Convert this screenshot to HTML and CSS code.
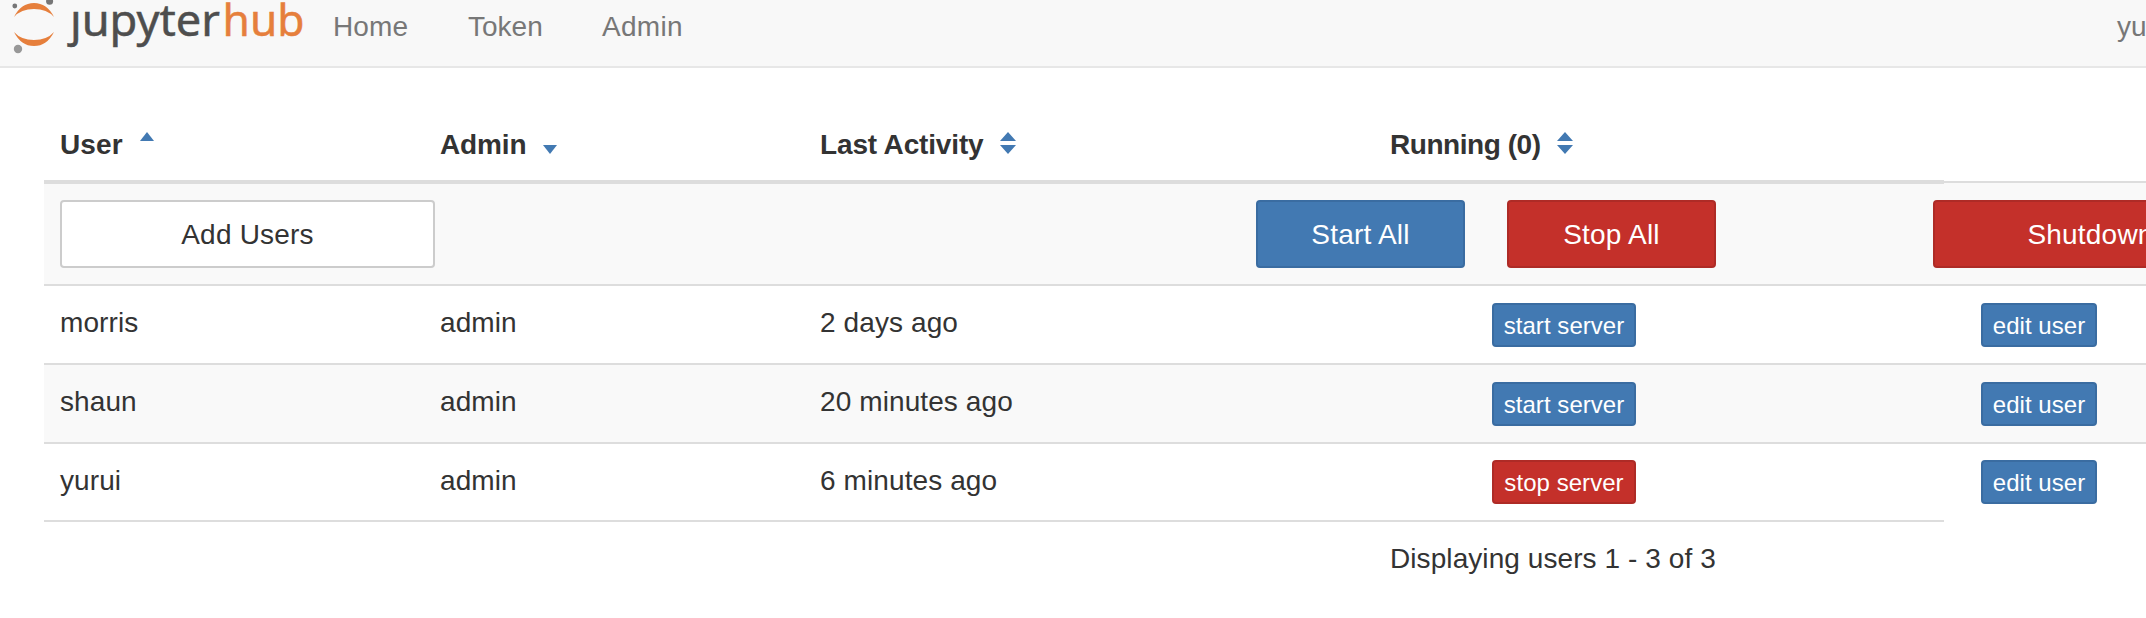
FILE: index.html
```html
<!DOCTYPE html>
<html lang="en">
<head>
<meta charset="utf-8">
<title>JupyterHub</title>
<link rel="stylesheet" href="styles.css">
</head>
<body>
<nav class="navbar">
  <svg class="logo" width="320" height="66" viewBox="0 0 320 66" role="img" aria-label="jupyterhub">
    <path d="M14 17Q21 3 34 3T54 17Q47 9 34 9T14 17Z" fill="#e67f3c"/>
    <path d="M14 32Q21 40 34 40T54 32Q47 46 34 46T14 32Z" fill="#e67f3c"/>
    <circle cx="14.8" cy="6" r="2.4" fill="#767677"/>
    <circle cx="49.6" cy="1.3" r="3.5" fill="#767677"/>
    <circle cx="18" cy="49" r="4.2" fill="#989898"/>
    <text class="logo-text jupyter" x="70" y="36" textLength="150" lengthAdjust="spacingAndGlyphs">ȷupyter</text>
    <text class="logo-text hub" x="222.5" y="36" textLength="82" lengthAdjust="spacingAndGlyphs">hub</text>
  </svg>
  <a class="nav-home">Home</a>
  <a class="nav-token">Token</a>
  <a class="nav-admin">Admin</a>
  <span class="nav-user">yurui</span>
</nav>
<main class="panel">
  <div class="row head">
    <div class="cell">User<svg class="sort" width="18" height="24"><path d="M2 10L9 1L16 10Z"/></svg></div>
    <div class="cell tight">Admin<svg class="sort" width="18" height="24"><path d="M2 14L9 23L16 14Z"/></svg></div>
    <div class="cell tight">Last Activity<svg class="sort" width="18" height="24"><path d="M1 10L9 1L17 10ZM1 14L9 23L17 14Z"/></svg></div>
    <div class="cell tighter">Running (0)<svg class="sort" width="18" height="24"><path d="M1 10L9 1L17 10ZM1 14L9 23L17 14Z"/></svg></div>
  </div>
  <div class="row actions striped">
    <button class="btn add">Add Users</button>
    <button class="btn primary start">Start All</button>
    <button class="btn danger stop">Stop All</button>
    <button class="btn danger shutdown">Shutdown Hub</button>
  </div>
  <div class="row user">
    <div class="cell">morris</div><div class="cell">admin</div><div class="cell">2 days ago</div>
    <div class="server"><button class="btn small primary">start server</button></div>
    <div class="edit"><button class="btn small primary">edit user</button></div>
  </div>
  <div class="row user striped">
    <div class="cell">shaun</div><div class="cell">admin</div><div class="cell">20 minutes ago</div>
    <div class="server"><button class="btn small primary">start server</button></div>
    <div class="edit"><button class="btn small primary">edit user</button></div>
  </div>
  <div class="row user last">
    <div class="cell">yurui</div><div class="cell">admin</div><div class="cell">6 minutes ago</div>
    <div class="server"><button class="btn small danger">stop server</button></div>
    <div class="edit"><button class="btn small primary">edit user</button></div>
  </div>
  <div class="row foot"><div class="summary">Displaying users 1 - 3 of 3</div></div>
</main>
</body>
</html>
```

FILE: styles.css
```css
* { box-sizing: border-box; }
body {
  margin: 0;
  height: 618px;
  overflow: hidden;
  background: #fff;
  color: #333;
  font: 28px/40px "Liberation Sans", Arial, sans-serif;
}
.navbar {
  display: flex;
  height: 68px;
  background: #f8f8f8;
  border-bottom: 2px solid #e7e7e7;
  color: #777;
  white-space: nowrap;
}
.navbar a, .nav-user { padding-top: 7px; }
.logo { flex: none; margin-right: 13px; }
.logo-text { font: 44.5px "Noto Sans", sans-serif; stroke-width: 0.5px; }
.jupyter { fill: #4e4e4e; stroke: #4e4e4e; }
.hub { fill: #e67f3c; stroke: #e67f3c; }
.nav-home { width: 135px; letter-spacing: 0.1px; }
.nav-token { width: 134px; }
.nav-admin { letter-spacing: 0.3px; }
.nav-user { width: 29px; margin-left: auto; }

.panel {
  width: 2102px;
  margin-left: 44px;
}
.row {
  display: grid;
  grid-template-columns: 380px 380px 570px 570px 202px;
}
.cell { padding-left: 16px; white-space: nowrap; letter-spacing: 0.1px; }
.head {
  position: relative;
  z-index: 1;
  width: 1900px;
  height: 116px;
  grid-template-columns: 380px 380px 570px 570px;
  padding-top: 57px;
  border-bottom: 4px solid #ddd;
  font-weight: bold;
}
.tight { letter-spacing: -0.15px; }
.tighter { letter-spacing: -0.45px; }
.sort { margin-left: 15px; vertical-align: -1px; fill: #4279b2; }
.striped { background: #f9f9f9; }
.actions {
  display: flex;
  height: 105px;
  margin-top: -3px;
  padding: 17px 0 0 16px;
  border-top: 2px solid #ddd;
  border-bottom: 2px solid #ddd;
  overflow: hidden;
}
.btn {
  flex: none;
  height: 68px;
  padding: 2px 0 0;
  border: 2px solid #ccc;
  border-radius: 4px;
  background: #fff;
  color: #333;
  font: inherit;
  letter-spacing: 0.2px;
  white-space: nowrap;
}
.primary { background: #4279b2; border-color: #3a6ca1; color: #fff; }
.danger { background: #c4302a; border-color: #ae2b26; color: #fff; }
.add { width: 375px; }
.start { width: 209px; margin-left: 821px; }
.stop { width: 209px; margin-left: 42px; }
.shutdown { width: 375px; margin-left: 217px; }
.user { height: 79px; padding-top: 17px; border-bottom: 2px solid #ddd; }
.last { width: 1900px; height: 78px; padding-top: 16px; }
.last .cell { padding-top: 1px; }
.server { padding-left: 118px; }
.edit { padding-left: 37px; }
.small { display: block; width: 144px; height: 44px; font-size: 24px; line-height: 38px; letter-spacing: 0.05px; }
.edit .small { width: 116px; }
.foot { padding-top: 17px; white-space: nowrap; }
.summary { grid-column: 4; padding-left: 16px; letter-spacing: 0.08px; }
```
